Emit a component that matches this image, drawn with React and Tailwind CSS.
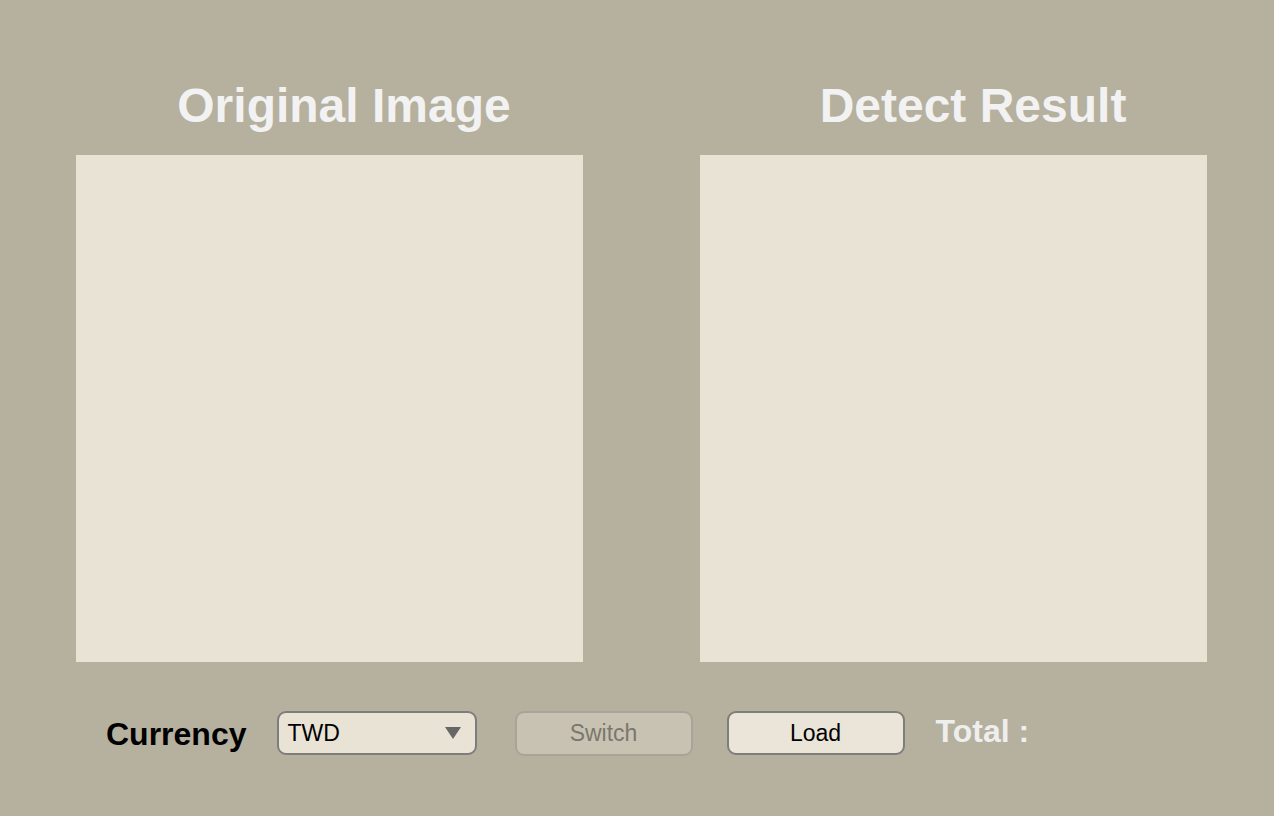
export default function App() {
  const font = { fontFamily: '"Liberation Sans", Arial, sans-serif' };
  return (
    <div className="w-full h-[816px] bg-[#b6b09f] overflow-hidden" style={font}>
      <div className="flex pl-[76px] pt-[78px] gap-[117px]">
        <div className="w-[507px] flex flex-col">
          <h1 className="h-[56px] leading-[56px] text-[48px] font-bold text-[#f2f2f2] text-center pl-[29px] whitespace-nowrap">
            Original Image
          </h1>
          <div className="mt-[21px] w-[507px] h-[507px] bg-[#e9e3d5]" />
        </div>
        <div className="w-[507px] flex flex-col">
          <h1 className="h-[56px] leading-[56px] text-[48px] font-bold text-[#f2f2f2] text-center pl-[39px] whitespace-nowrap">
            Detect Result
          </h1>
          <div className="mt-[21px] w-[507px] h-[507px] bg-[#e9e3d5]" />
        </div>
      </div>

      <div className="flex items-start pl-[106px] mt-[49px]">
        <div className="mt-[5px] text-[32px] leading-[37px] font-bold text-black">Currency</div>
        <div className="ml-[30px] w-[200px] h-[44px] rounded-[9px] border-2 border-[#7d7d7d] bg-[#e9e3d5] flex items-center justify-between pl-[9px] pr-[14px]">
          <span className="text-[23px] text-black leading-none">TWD</span>
          <svg width="16" height="12" viewBox="0 0 16 12">
            <polygon points="0,0 16,0 8,12" fill="#666666" />
          </svg>
        </div>
        <button className="ml-[38px] w-[178px] h-[45px] rounded-[9px] border-2 border-[#a8a499] bg-[#c8c2b3] text-[23px] text-[#7b776c] flex items-center justify-center">
          Switch
        </button>
        <button className="ml-[34px] w-[178px] h-[44px] rounded-[9px] border-2 border-[#7d7d7d] bg-[#ebe4d8] text-[23px] text-black flex items-center justify-center">
          Load
        </button>
        <div className="ml-[31px] mt-[2px] text-[32px] leading-[37px] font-bold text-[#eeeeee] whitespace-nowrap">
          Total :
        </div>
      </div>
    </div>
  );
}
